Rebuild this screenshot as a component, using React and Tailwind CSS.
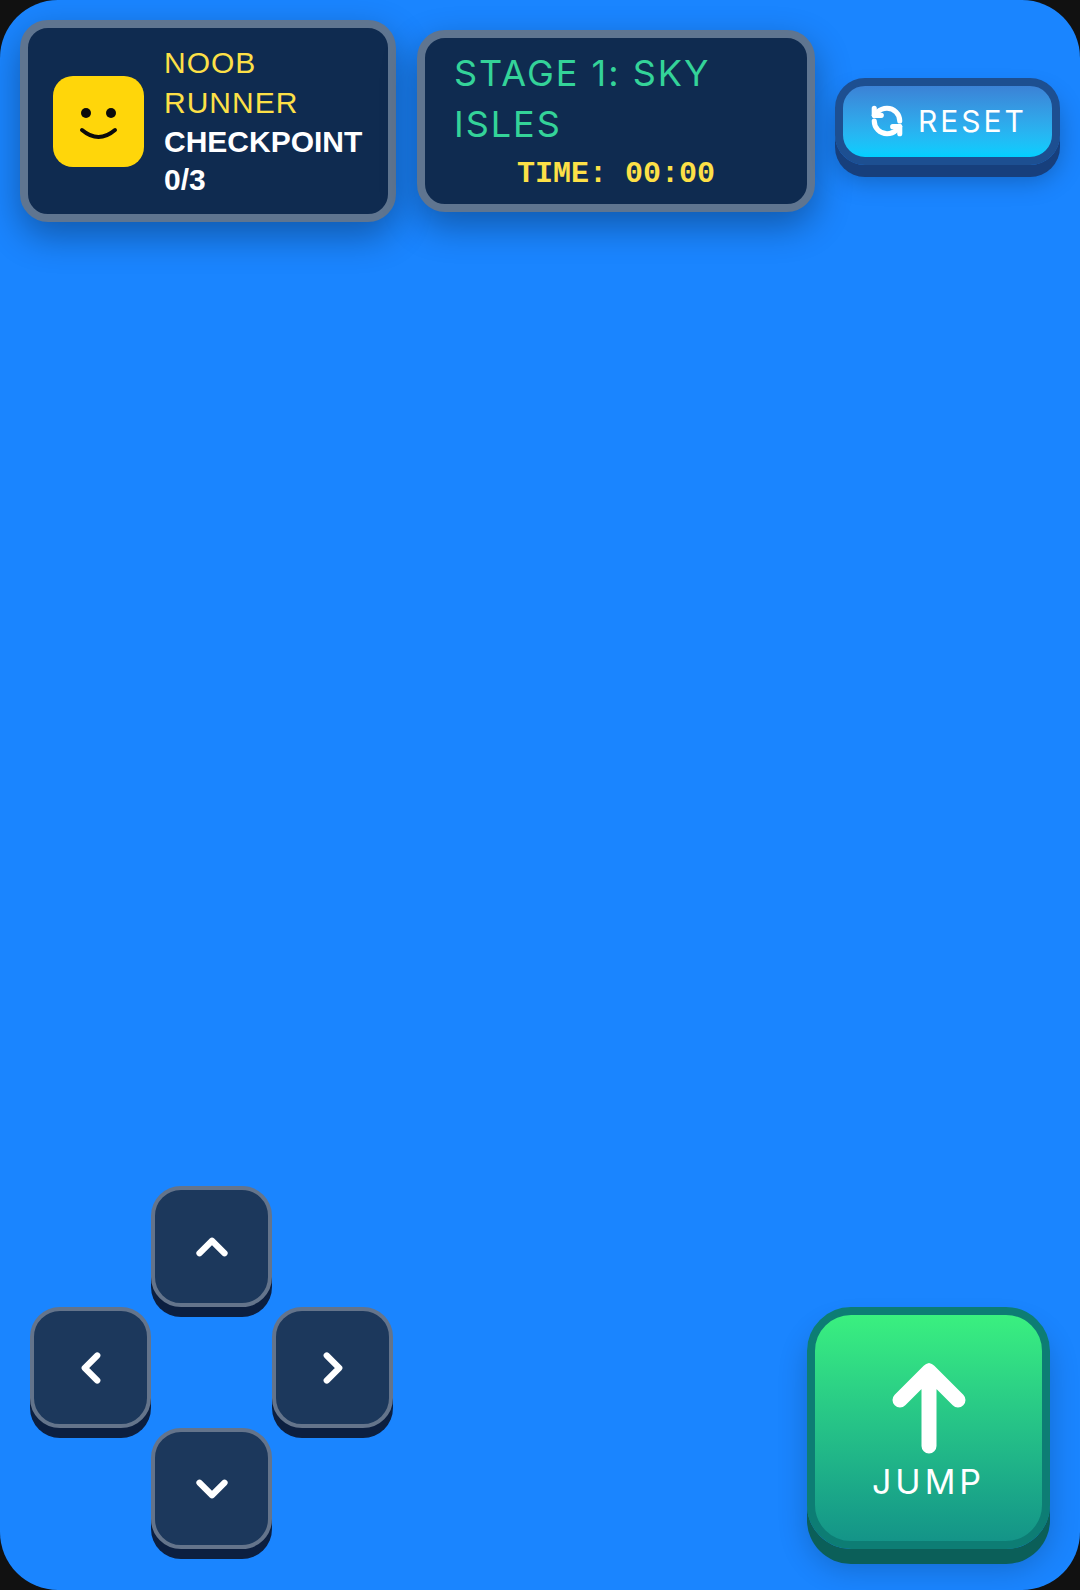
import { ChevronUp, ChevronDown, ChevronLeft, ChevronRight, RefreshCcw } from "lucide-react";

function Pad({ children, className = "" }) {
  return (
    <button className={`flex h-[121px] w-[121px] items-center justify-center rounded-[30px] border-4 border-[#64748b] bg-[#1c385c] text-white shadow-[0_10px_0_#0c1f40] ${className}`}>
      {children}
    </button>
  );
}

export default function App() {
  return (
    <div className="h-[1590px] w-[1080px] bg-[#111111] [font-family:'Liberation_Sans',sans-serif]">
      <div className="flex h-full w-full flex-col justify-between overflow-hidden rounded-[58px] bg-[#1a85ff]">
        <div className="flex items-center pl-[20px] pt-[20px]">
          <div className="flex h-[202px] w-[376px] shrink-0 items-center gap-[20px] rounded-[28px] border-[8px] border-[#5f7590] bg-[#0f2b50] pl-[25px] shadow-[0_14px_36px_rgba(0,0,0,0.33)]">
            <div className="flex h-[91px] w-[91px] shrink-0 items-center justify-center rounded-[20px] bg-[#ffd60a]">
              <svg width="91" height="91" viewBox="0 0 91 91" fill="none">
                <circle cx="33" cy="37" r="5" fill="#0b0b0b" />
                <circle cx="58" cy="37" r="5" fill="#0b0b0b" />
                <path d="M29 54 Q45.5 68 62 54" stroke="#0b0b0b" strokeWidth="4" strokeLinecap="round" />
              </svg>
            </div>
            <div className="flex flex-col">
              <div className="w-[140px] text-[30px] leading-[40px] tracking-[1px] text-[#fde047]">NOOB RUNNER</div>
              <div className="w-[210px] text-[30px] font-bold leading-[38px] text-white">CHECKPOINT 0/3</div>
            </div>
          </div>
          <div className="ml-[21px] h-[182px] w-[398px] shrink-0 rounded-[28px] border-[8px] border-[#5f7590] bg-[#0f2b50] px-[29px] pt-[10px] shadow-[0_14px_36px_rgba(0,0,0,0.33)]">
            <div className="text-[36px] leading-[51px] tracking-[2px] text-[#34d399] [font-family:'Inter',sans-serif]">STAGE 1: SKY ISLES</div>
            <div className="text-center text-[30px] font-bold leading-[48px] text-[#fde047] [font-family:'Liberation_Mono',monospace]">TIME: 00:00</div>
          </div>
          <button className="ml-[20px] flex h-[87px] w-[225px] shrink-0 items-center justify-center gap-[14px] rounded-[30px] border-[8px] border-[#1d4f91] bg-gradient-to-b from-[#3b82d6] to-[#00cfff] pl-[2px] text-[30px] tracking-[3px] text-white shadow-[0_12px_0_#173f7c,0_16px_24px_rgba(0,0,0,0.25)] [font-family:'Inter',sans-serif]">
            <RefreshCcw size={34} strokeWidth={3.6} />
            RESET
          </button>
        </div>
        <div className="flex items-end justify-between pb-[41px] pl-[30px] pr-[30px]">
          <div className="grid grid-cols-[121px_121px_121px] grid-rows-[121px_121px_121px]">
            <div />
            <Pad><ChevronUp size={50} strokeWidth={3} /></Pad>
            <div />
            <Pad><ChevronLeft size={50} strokeWidth={3} /></Pad>
            <div />
            <Pad><ChevronRight size={50} strokeWidth={3} /></Pad>
            <div />
            <Pad><ChevronDown size={50} strokeWidth={3} /></Pad>
            <div />
          </div>
          <button className="flex h-[242px] w-[243px] flex-col items-center justify-center gap-[8px] rounded-[44px] border-[8px] border-[#0d7d74] bg-gradient-to-b from-[#3af07f] to-[#149488] pt-[8px] text-white shadow-[0_15px_0_#0b5f59,0_20px_30px_rgba(0,0,0,0.2)]">
            <svg width="74" height="91" viewBox="0 0 74 91" fill="none" stroke="currentColor" strokeWidth="15" strokeLinecap="round" strokeLinejoin="round">
              <path d="M37 8 V83 M8 37 L37 8 L66 37" />
            </svg>
            <span className="text-[34px] leading-[40px] tracking-[4px] [font-family:'Inter',sans-serif]">JUMP</span>
          </button>
        </div>
      </div>
    </div>
  );
}
